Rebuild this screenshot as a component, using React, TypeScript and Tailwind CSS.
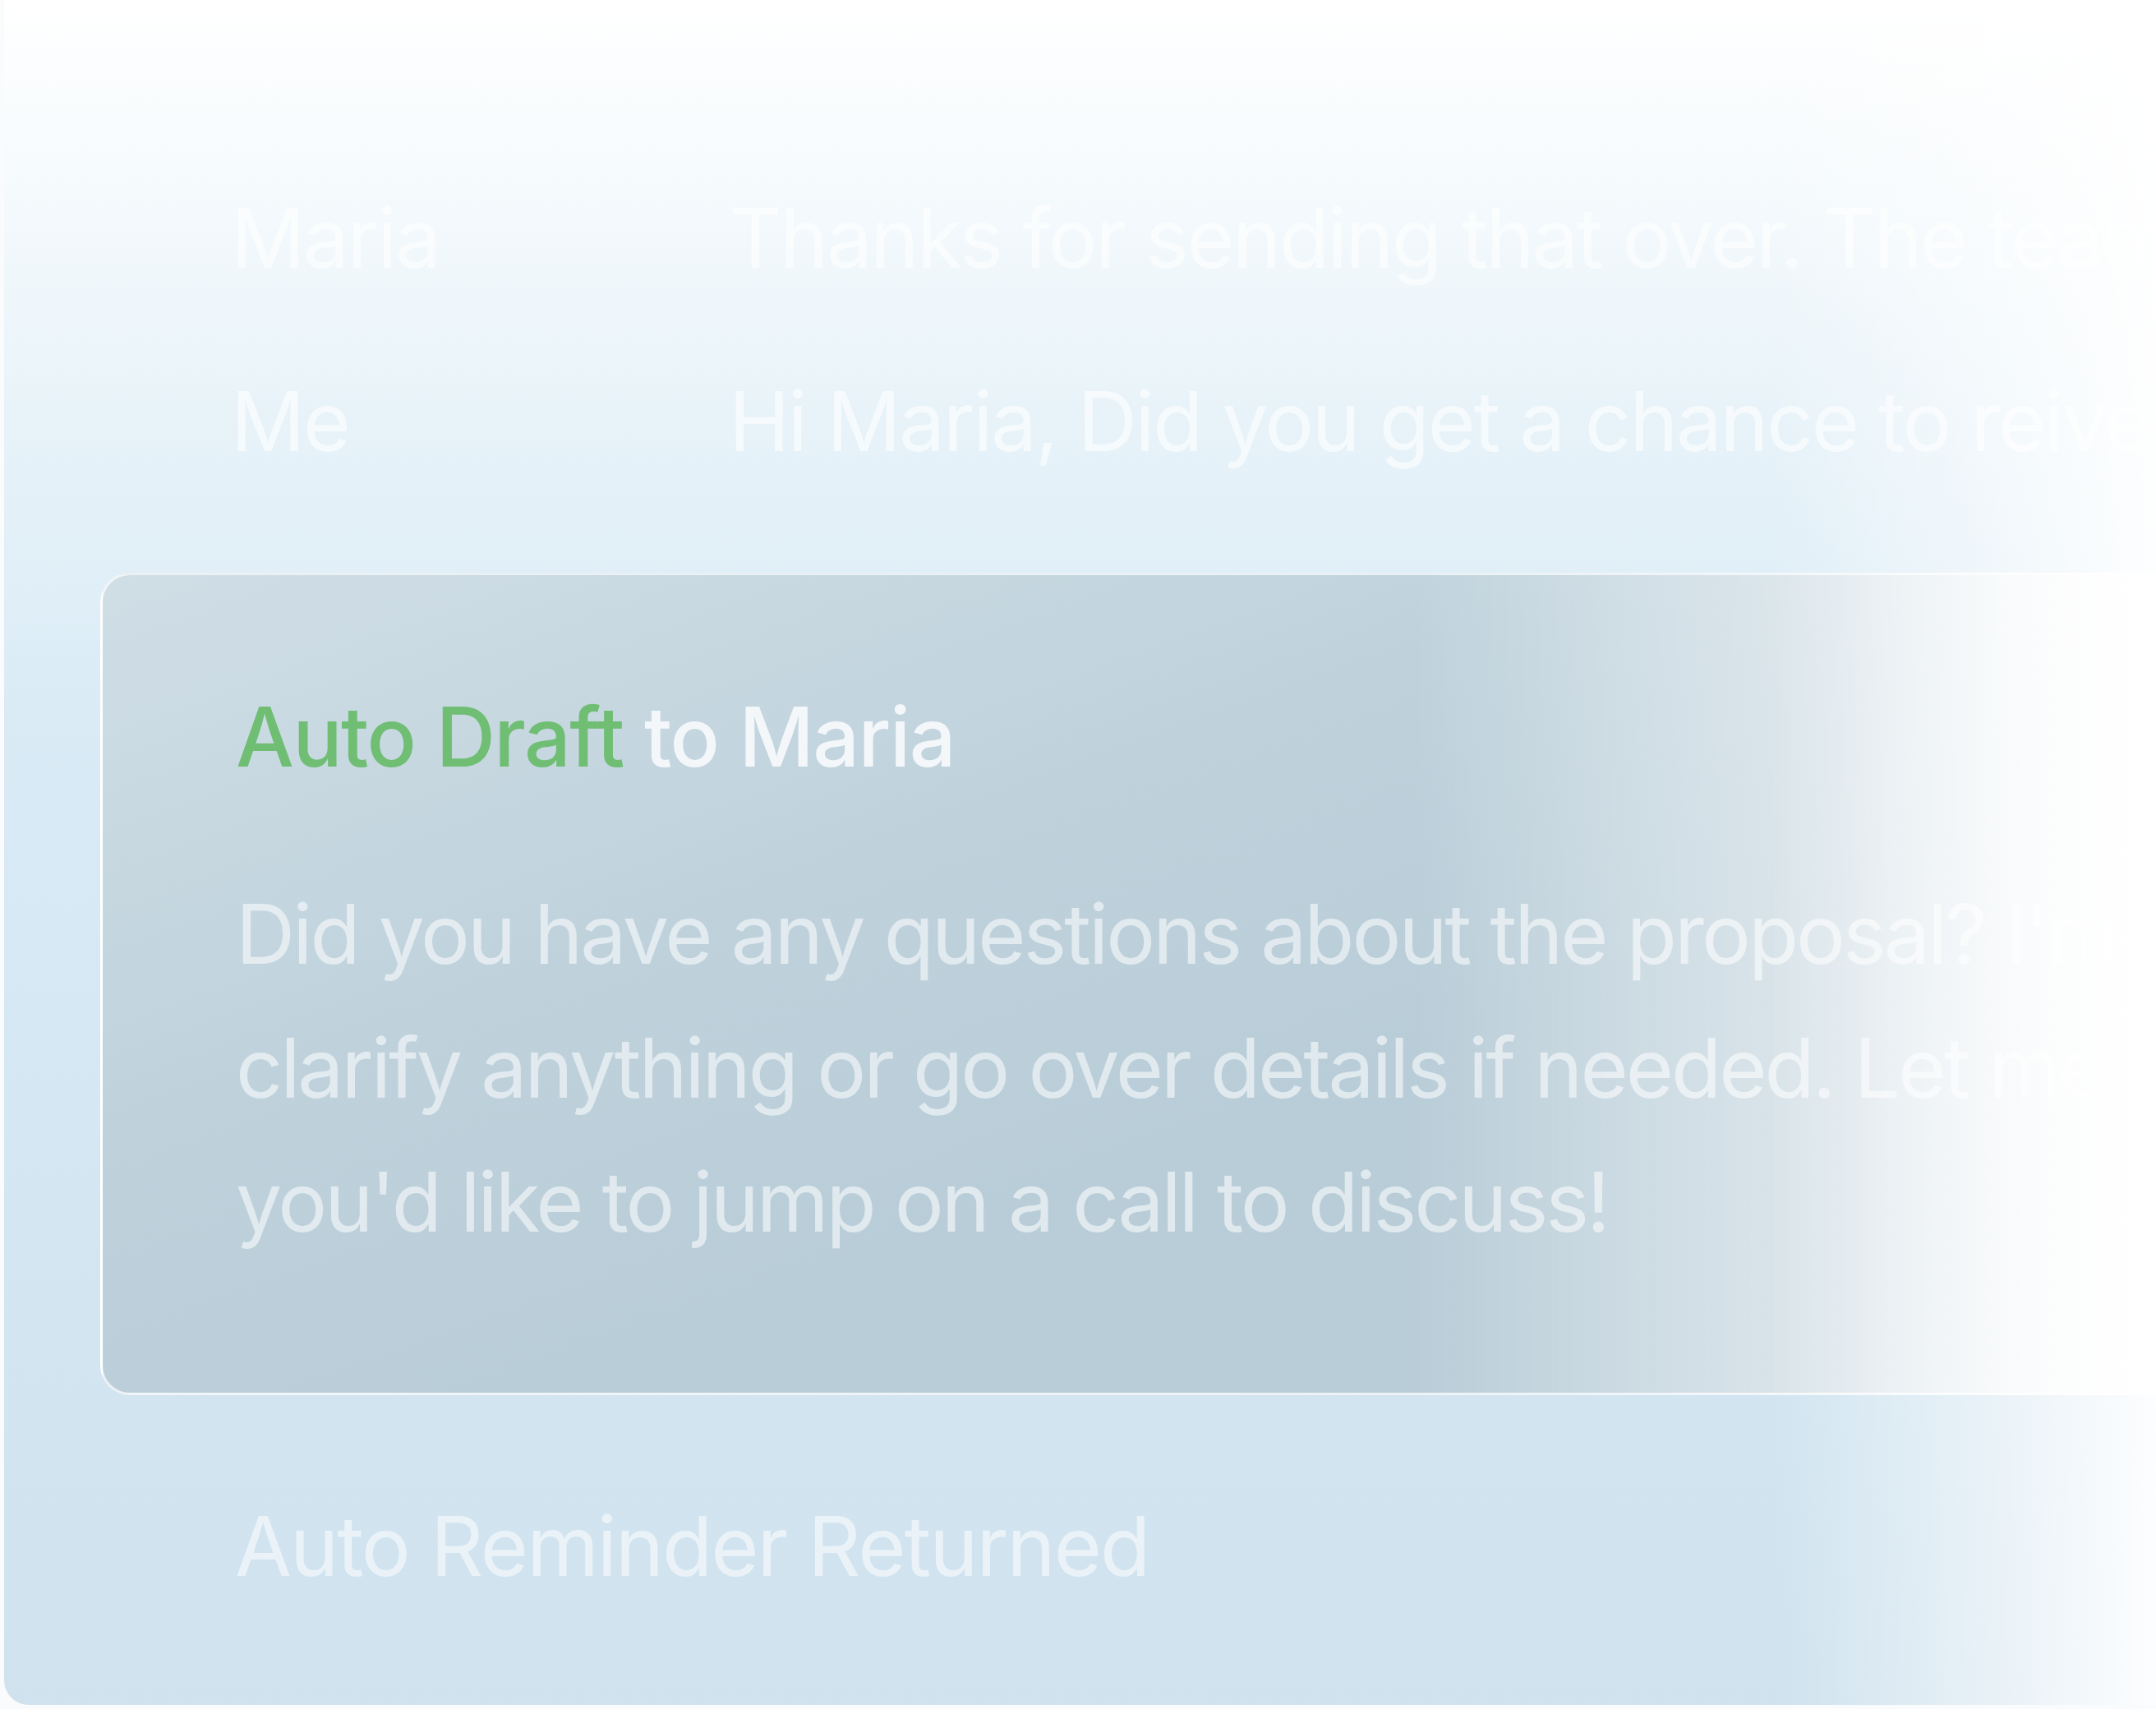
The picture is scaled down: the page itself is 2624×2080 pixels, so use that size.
const ROWS = [
  { from: 'Maria', text: 'Thanks for sending that over. The team will take a look this week.' },
  { from: 'Me', text: 'Hi Maria, Did you get a chance to reivew the proposal I sent?' },
];

const DRAFT_LINES = [
  "Did you have any questions about the proposal? I'm happy to",
  'clarify anything or go over details if needed. Let me know if',
  "you'd like to jump on a call to discuss!",
];

export default function App() {
  return (
    <div className="relative w-[2624px] h-[2080px] overflow-hidden bg-[#f9fbfd] font-['Inter',sans-serif] flex pl-[5px] pb-[5px]">
      <div className="relative flex-1 flex flex-col overflow-hidden rounded-bl-[30px] bg-[linear-gradient(180deg,#ffffff_0%,#f7fbfd_9%,#e8f3f9_24%,#daebf6_42%,#d4e7f3_65%,#cfe2ee_100%)]">
        {/* conversation rows */}
        <div className="flex flex-col gap-[103px] pt-[230px] pl-[276px]">
          {ROWS.map((row) => (
            <div key={row.from} className="flex items-center whitespace-nowrap text-[100px] leading-[120px] tracking-[-0.025em] text-white/60">
              <span className="w-[606px] shrink-0">{row.from}</span>
              <span>{row.text}</span>
            </div>
          ))}
        </div>

        {/* draft card */}
        <div className="mt-[124px] ml-[117px] -mr-[80px] rounded-[36px] border-[3px] border-white/70 bg-[linear-gradient(90deg,rgba(255,255,255,0)_0%,rgba(255,255,255,0)_62%,rgba(255,255,255,0.28)_72%,rgba(255,255,255,0.55)_83%,rgba(255,255,255,0.85)_92%,#ffffff_98%),linear-gradient(160deg,#d0dee6_0%,#bfd2dc_35%,#b9cdd8_60%)] pt-[137px] pb-[151px] pl-[162px]">
          <div className="whitespace-nowrap text-[100px] leading-[120px] tracking-[-0.015em] font-medium">
            <span className="text-[#6fbe74]">Auto Draft</span>
            <span className="text-[#f4f7fa]"> to Maria</span>
          </div>
          <div className="mt-[98px] whitespace-nowrap text-[100px] leading-[163px] tracking-[-0.03em] text-white/55">
            {DRAFT_LINES.map((line) => (
              <div key={line}>{line}</div>
            ))}
          </div>
        </div>

        <div className="mt-[124px] pl-[281px] whitespace-nowrap text-[100px] leading-[120px] tracking-[-0.02em] text-white/55">
          Auto Reminder Returned
        </div>

        {/* white wash on the right */}
        <div className="pointer-events-none absolute inset-0 bg-[linear-gradient(90deg,rgba(255,255,255,0)_0%,rgba(255,255,255,0)_82%,rgba(255,255,255,0.5)_92%,rgba(255,255,255,0.95)_100%)]" />
      </div>
    </div>
  );
}
